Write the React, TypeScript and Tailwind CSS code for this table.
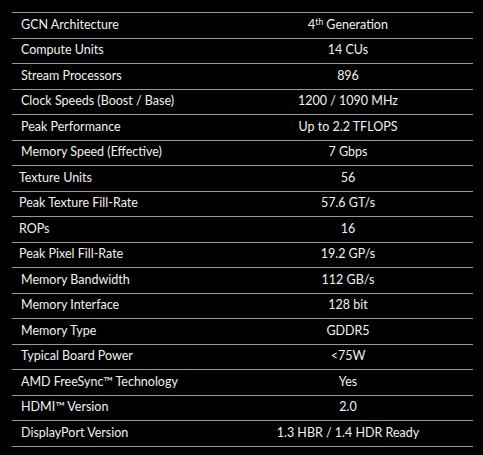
import React from "react";

interface SpecRow {
  label: React.ReactNode;
  value: React.ReactNode;
  tight?: boolean;
}

const specs: SpecRow[] = [
  {
    label: "GCN Architecture",
    value: (
      <>
        4<sup className="text-[8.5px]">th</sup> Generation
      </>
    ),
  },
  { label: "Compute Units", value: "14 CUs" },
  { label: "Stream Processors", value: "896" },
  { label: "Clock Speeds (Boost / Base)", value: "1200 / 1090 MHz" },
  { label: "Peak Performance", value: "Up to 2.2 TFLOPS" },
  { label: "Memory Speed (Effective)", value: "7 Gbps" },
  { label: "Texture Units", value: "56", tight: true },
  { label: "Peak Texture Fill-Rate", value: "57.6 GT/s", tight: true },
  { label: "ROPs", value: "16", tight: true },
  { label: "Peak Pixel Fill-Rate", value: "19.2 GP/s", tight: true },
  { label: "Memory Bandwidth", value: "112 GB/s" },
  { label: "Memory Interface", value: "128 bit" },
  { label: "Memory Type", value: "GDDR5" },
  { label: "Typical Board Power", value: "<75W" },
  { label: "AMD FreeSync™ Technology", value: "Yes" },
  { label: "HDMI™ Version", value: "2.0" },
  { label: "DisplayPort Version", value: "1.3 HBR / 1.4 HDR Ready" },
];

const App = () => {
  return (
    <div className="w-[483px] h-[455px] bg-black pt-[12px] pl-[12px] font-['Lato',sans-serif] text-[12.5px] text-[#f2f2f2]">
      <div className="w-[461px] border-t border-[#999999]">
        {specs.map((row, i) => (
          <div
            key={i}
            className="grid grid-cols-[211px_1fr] h-[25.5px] items-center border-b border-[#999999]"
          >
            <div className={row.tight ? "pl-[7px]" : "pl-[9px]"}>{row.label}</div>
            <div className="text-center">{row.value}</div>
          </div>
        ))}
      </div>
    </div>
  );
};

export default App;
